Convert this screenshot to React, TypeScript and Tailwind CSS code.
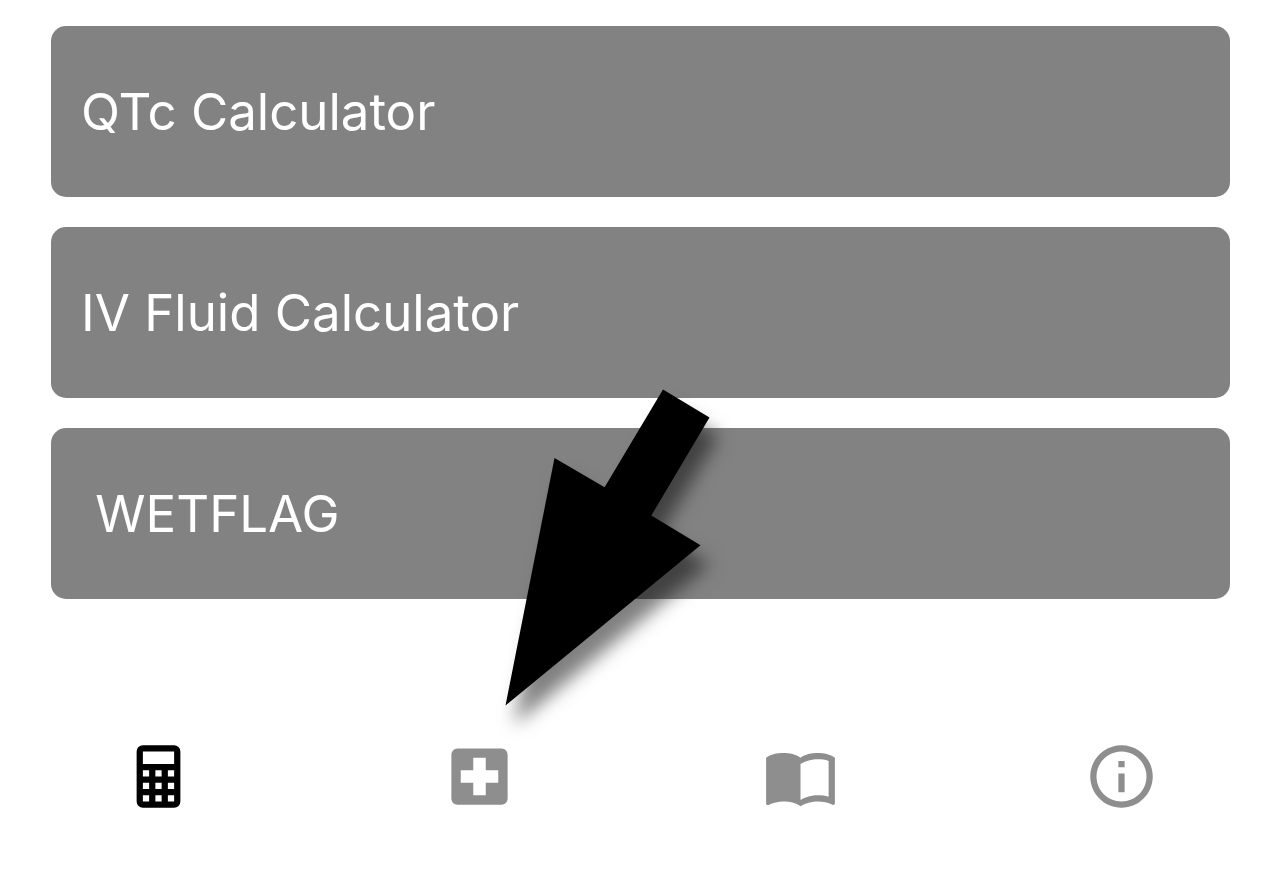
import { MdImportContacts, MdInfoOutline, MdLocalHospital } from "react-icons/md";

const calculators = ["QTc Calculator", "IV Fluid Calculator", " WETFLAG"];

function CalculatorIcon() {
  return (
    <svg viewBox="0 0 24 24" fill="currentColor" className="size-[75px]" aria-hidden="true">
      <path d="M7,2H17A2,2 0 0,1 19,4V20A2,2 0 0,1 17,22H7A2,2 0 0,1 5,20V4A2,2 0 0,1 7,2M7,4V8H17V4H7M7,10V12H9V10H7M11,10V12H13V10H11M15,10V12H17V10H15M7,14V16H9V14H7M11,14V16H13V14H11M15,14V16H17V14H15M7,18V20H9V18H7M11,18V20H13V18H11M15,18V20H17V18H15Z" />
    </svg>
  );
}

function PointerArrow() {
  return (
    <svg
      viewBox="0 0 260 370"
      className="pointer-events-none absolute top-[370px] left-[480px] h-[370px] w-[260px] overflow-visible"
      aria-hidden="true"
    >
      <defs>
        <filter id="arrow-shadow" x="-20%" y="-20%" width="140%" height="140%">
          <feDropShadow dx="9" dy="19" stdDeviation="9" floodColor="#000" floodOpacity="0.5" />
        </filter>
      </defs>
      <polygon
        points="183,19.5 229.5,47.5 171.3,145.5 220.5,175.3 25.5,335.5 74.5,88 124.6,117.3"
        fill="#000"
        filter="url(#arrow-shadow)"
      />
    </svg>
  );
}

export default function App() {
  return (
    <div className="relative flex min-h-screen flex-col bg-white font-['Inter','Liberation_Sans',sans-serif]">
      <main className="flex flex-col gap-[30px] pt-[26px] pr-[52px] pl-[51px]">
        {calculators.map((name) => (
          <button
            key={name}
            type="button"
            className="flex h-[171px] items-center rounded-[15px] bg-[#828282] px-[30px] text-left text-[51px] leading-[64px] font-normal whitespace-pre text-white"
          >
            {name}
          </button>
        ))}
      </main>
      <nav aria-label="Main" className="mt-[140px] -ml-0.5 grid grid-cols-4 pb-[73px] text-[#8e8e8e]">
        <button type="button" aria-label="Calculators" aria-current="page" className="flex justify-center text-black">
          <CalculatorIcon />
        </button>
        <button type="button" aria-label="Hospital" className="flex justify-center">
          <MdLocalHospital className="size-[75px]" />
        </button>
        <button type="button" aria-label="Guidelines" className="flex justify-center">
          <MdImportContacts className="size-[75px]" />
        </button>
        <button type="button" aria-label="Information" className="flex justify-center">
          <MdInfoOutline className="size-[75px]" />
        </button>
      </nav>
      <PointerArrow />
    </div>
  );
}
